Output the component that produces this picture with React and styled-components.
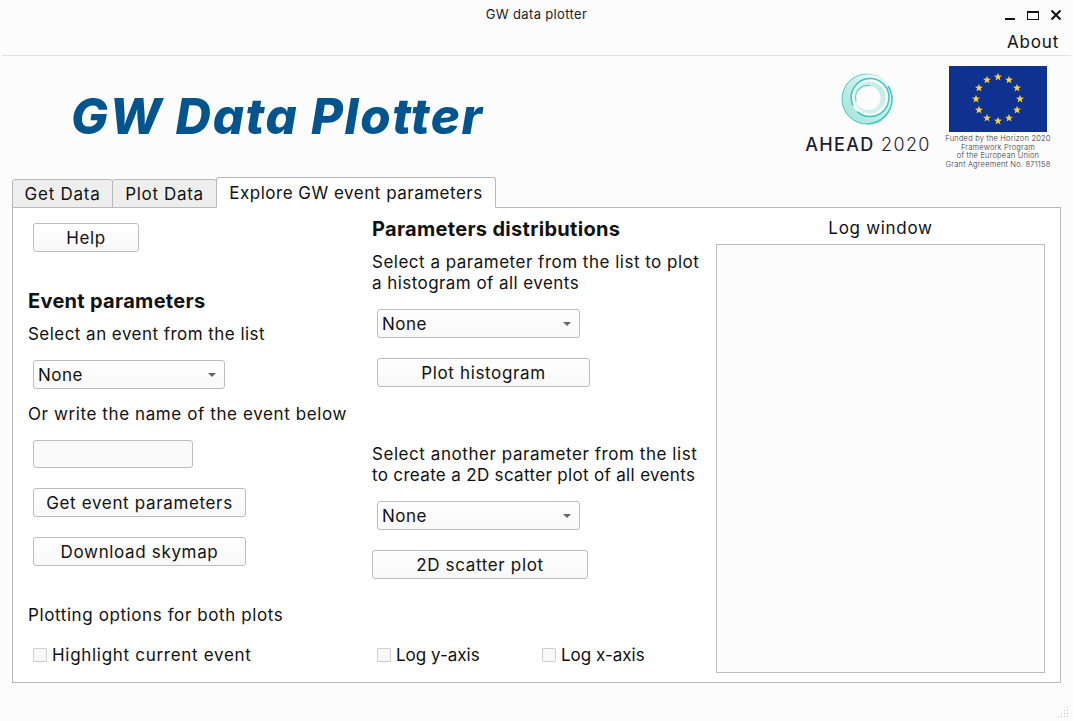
import React from "react";
import styled, { createGlobalStyle } from "styled-components";

const Global = createGlobalStyle`
  html, body { margin: 0; padding: 0; background: #fcfcfc; }
  * { box-sizing: border-box; }
  *::before, *::after { box-sizing: border-box; }
  body { font-family: "Inter", "Open Sans", sans-serif; color: #111; }
`;

const Win = styled.div`
  width: 1073px; height: 721px; display: flex; flex-direction: column; overflow: hidden; position: relative;
`;
const TitleBar = styled.div`
  height: 28px; display: flex; align-items: center; justify-content: center; font-size: 13px; letter-spacing: .35px; color: #222; position: relative;
`;
const WinControls = styled.div`
  position: absolute; right: 11px; top: 9px; display: flex; gap: 11px; align-items: center;
`;
const MenuBar = styled.div`
  height: 28px; margin: 0 2px; padding: 0 12px 0 0; display: flex; align-items: center; justify-content: flex-end;
  border-bottom: 1px solid #e2e2e2; font-size: 17px; letter-spacing: .8px;
`;
const Header = styled.div`
  height: 121px; display: flex; align-items: flex-start; position: relative;
`;
const AppTitle = styled.h1`
  margin: 32px 0 0 71px; font-size: 49px; font-weight: 800; font-style: italic; color: #01558f; line-height: 58px; letter-spacing: 1.7px;
  flex: 1;
`;
const Ahead = styled.div`
  width: 128px; margin: 18px 11px 0 0; display: flex; flex-direction: column; align-items: center;
`;
const AheadMark = styled.svg`
  margin-top: -2px; margin-left: -2px;
`;
const AheadText = styled.div`
  font-size: 18px; line-height: 20px; margin-top: 9px; white-space: nowrap; color: #1e1e32; letter-spacing: 1.35px;
  b { font-weight: 500; } span { font-weight: 300; }
`;
const Eu = styled.div`
  width: 110px; margin: 10px 20px 0 0; display: flex; flex-direction: column; align-items: center;
`;
const EuNote = styled.div`
  font-size: 7.5px; line-height: 8.7px; font-weight: 300; letter-spacing: .2px; text-align: center; white-space: nowrap; margin-top: 3px; color: #333;
`;
const Tabs = styled.div`
  height: 31px; padding-left: 12px; display: flex; align-items: flex-end; position: relative; z-index: 1; margin-bottom: -1px;
`;
const Tab = styled.div`
  height: ${p => p.$active ? 31 : 29}px; padding: 0 12px; display: flex; align-items: center; font-size: 17px; letter-spacing: ${p => p.$ls ?? .5}px;
  width: ${p => p.$w}px; justify-content: center; white-space: nowrap;
  border: 1px solid #b9b9b9; border-radius: 3px 3px 0 0; margin-left: ${p => p.$first ? 0 : -1}px;
  background: ${p => p.$active ? "#fff" : "#eeeeee"};
  border-bottom: ${p => p.$active ? "1px solid #fff" : "1px solid #b9b9b9"};
`;
const Panel = styled.div`
  margin: 0 12px; width: 1049px; height: 476px; background: #fff; border: 1px solid #b9b9b9; display: grid;
  grid-template-columns: 344px 344px 1fr; padding-left: 15px; position: relative;
`;
const Col = styled.div`display: flex; flex-direction: column; align-items: flex-start;`;
const Heading = styled.div`
  font-size: 20px; font-weight: 700; line-height: 24px; margin-top: ${p => p.$mt || 0}px; letter-spacing: .3px;
`;
const Label = styled.div`
  font-size: 17px; line-height: 22px; margin-top: ${p => p.$mt || 0}px; white-space: nowrap; letter-spacing: ${p => p.$ls ?? .6}px;
`;
const Para = styled.div`
  margin-top: ${p => p.$mt || 0}px;
`;
const ParaLine = styled.div`
  font-size: 17px; line-height: 21px; white-space: nowrap; letter-spacing: ${p => p.$ls ?? .48}px;
`;
const Button = styled.button`
  display: block; font: inherit; font-size: 17px; letter-spacing: .65px; height: 29px; width: ${p => p.$w}px; padding: 0;
  margin-top: ${p => p.$mt || 0}px; margin-left: ${p => p.$ml ?? 5}px; color: #111;
  border: 1px solid #bdbdbd; border-radius: 3px; background: linear-gradient(#fff, #f8f8f8);
`;
const Select = styled.div`
  height: 29px; width: ${p => p.$w}px; margin-top: ${p => p.$mt || 0}px; margin-left: 5px; padding: 0 8px 0 4px;
  display: flex; align-items: center; justify-content: space-between; font-size: 17px; letter-spacing: .5px;
  border: 1px solid #bdbdbd; border-radius: 3px; background: linear-gradient(#fff, #f8f8f8);
  &::after { content: ""; width: 8px; height: 4px; border: 4px solid transparent; border-top: 4px solid #666; border-bottom: 0; }
`;
const Input = styled.div`
  height: 28px; width: 160px; margin-top: ${p => p.$mt || 0}px; margin-left: 5px;
  border: 1px solid #bdbdbd; border-radius: 3px; background: #fafafa;
`;
const Check = styled.label`
  display: flex; align-items: center; gap: 5px; font-size: 17px; letter-spacing: ${p => p.$ls ?? .7}px; white-space: nowrap; color: #111;
  margin-left: ${p => p.$ml ?? 5}px; margin-top: ${p => p.$mt || 0}px; width: ${p => p.$w ? `${p.$w}px` : "auto"};
  &::before { content: ""; width: 14px; height: 14px; flex: none; border: 1px solid #cfcfcf; border-radius: 1px; background: #f8f8f8; }
`;
const CheckRow = styled.div`display: flex; margin-top: 66px; margin-left: 5px;`;
const LogCol = styled.div`display: flex; flex-direction: column; align-items: stretch; padding-top: 9px; width: 329px;`;
const LogTitle = styled.div`font-size: 17px; line-height: 22px; text-align: center; letter-spacing: .7px;`;
const LogBox = styled.div`height: 429px; margin-top: 5px; border: 1px solid #bdbdbd; background: #fcfcfc;`;
const Grip = styled.svg`position: absolute; right: 3px; bottom: 3px;`;

const star = (cx, cy, r) => {
  let pts = [];
  for (let i = 0; i < 10; i++) {
    const a = -Math.PI / 2 + (i * Math.PI) / 5;
    const rr = i % 2 ? r * 0.42 : r;
    pts.push(`${(cx + rr * Math.cos(a)).toFixed(2)},${(cy + rr * Math.sin(a)).toFixed(2)}`);
  }
  return pts.join(" ");
};

const Flag = () => (
  <svg width="98" height="66" viewBox="0 0 98 66">
    <rect width="98" height="66" fill="#0f3290" />
    {Array.from({ length: 12 }).map((_, i) => {
      const a = (i * Math.PI) / 6;
      return <polygon key={i} points={star(49 + 22 * Math.sin(a), 33 - 22 * Math.cos(a), 4.2)} fill="#f8cf3a" />;
    })}
  </svg>
);

const Swirl = () => (
  <AheadMark width="52" height="54" viewBox="0 0 52 54" fill="none">
    <defs>
      <linearGradient id="band" x1="0.1" y1="0.9" x2="0.9" y2="0.1">
        <stop offset="0" stopColor="#a8e5de" />
        <stop offset=".55" stopColor="#c6eeea" />
        <stop offset="1" stopColor="#fcfcfc" />
      </linearGradient>
      <linearGradient id="edge" x1="0.2" y1="0.9" x2="0.9" y2="0">
        <stop offset="0" stopColor="#37c8ba" />
        <stop offset=".75" stopColor="#4fcfc4" />
        <stop offset="1" stopColor="#e4f7f5" />
      </linearGradient>
      <linearGradient id="inner" x1="0" y1="1" x2="1" y2="0.2">
        <stop offset="0" stopColor="#c9f0ec" />
        <stop offset="1" stopColor="#8fe0d7" />
      </linearGradient>
    </defs>
    <circle cx="26" cy="27" r="25" fill="url(#band)" />
    <path d="M45 10.500A25 25 0 0 0 26 2 25 25 0 0 0 1 27a25 25 0 0 0 25 25" stroke="url(#edge)" strokeWidth="1" />
    <path d="M26 52A25 25 0 0 0 51 27c0-5-1.500-9-4-13" stroke="#3bcabd" strokeWidth="1.600" />
    <circle cx="29" cy="25.500" r="19" fill="#fcfcfc" />
    <path d="M12 33.500A19 19 0 0 1 29 6.500a19 19 0 0 1 19 19 19 19 0 0 1-19 19c-5 0-10-2-13-5" stroke="#36c6b9" strokeWidth="1.500" />
    <circle cx="28.500" cy="25.500" r="16" fill="url(#inner)" opacity=".55" />
    <circle cx="27" cy="26" r="12.500" fill="#fcfcfc" />
    <path d="M15 29a12.500 12.500 0 0 1 5-13.500c3-2 6-2.500 9-2" stroke="#55d0c5" strokeWidth="1.200" />
    <path d="M19 36c4 3 9 3.500 13 2" stroke="#c9f0ec" strokeWidth="1.200" />
  </AheadMark>
);

export default function App() {
  return (
    <Win>
      <Global />
      <TitleBar>
        GW data plotter
        <WinControls>
          <svg width="12" height="12" viewBox="0 0 12 12"><rect x="1" y="9" width="10" height="2" fill="#111" /></svg>
          <svg width="12" height="12" viewBox="0 0 12 12" fill="none"><rect x=".5" y="2.5" width="11" height="8" stroke="#111" /><rect x="0" y="2" width="12" height="2" fill="#111" /></svg>
          <svg width="12" height="12" viewBox="0 0 12 12" fill="none"><path d="M1.5 1.5l9 9M10.5 1.5l-9 9" stroke="#111" strokeWidth="2" /></svg>
        </WinControls>
      </TitleBar>
      <MenuBar>About</MenuBar>
      <Header>
        <AppTitle>GW Data Plotter</AppTitle>
        <Ahead>
          <Swirl />
          <AheadText><b>AHEAD</b> <span>2020</span></AheadText>
        </Ahead>
        <Eu>
          <Flag />
          <EuNote>Funded by the Horizon 2020<br />Framework Program<br />of the European Union<br />Grant Agreement No. 871158</EuNote>
        </Eu>
      </Header>
      <Tabs>
        <Tab $first $w={101} $ls={.75}>Get Data</Tab>
        <Tab $w={105} $ls={.65}>Plot Data</Tab>
        <Tab $active $w={280}>Explore GW event parameters</Tab>
      </Tabs>
      <Panel>
        <Col>
          <Button $w={106} $mt={15}>Help</Button>
          <Heading $mt={37}>Event parameters</Heading>
          <Label $mt={10} $ls={.46}>Select an event from the list</Label>
          <Select $w={192} $mt={15}>None</Select>
          <Label $mt={14}>Or write the name of the event below</Label>
          <Input $mt={15} />
          <Button $w={213} $mt={20}>Get event parameters</Button>
          <Button $w={213} $mt={20}>Download skymap</Button>
          <Label $mt={38}>Plotting options for both plots</Label>
          <Check $mt={19}>Highlight current event</Check>
        </Col>
        <Col>
          <Heading $mt={9}>Parameters distributions</Heading>
          <Para $mt={11}>
            <ParaLine $ls={.5}>Select a parameter from the list to plot</ParaLine>
            <ParaLine $ls={.44}>a histogram of all events</ParaLine>
          </Para>
          <Select $w={203} $mt={15}>None</Select>
          <Button $w={213} $mt={20}>Plot histogram</Button>
          <Para $mt={57}>
            <ParaLine $ls={.56}>Select another parameter from the list</ParaLine>
            <ParaLine $ls={.33}>to create a 2D scatter plot of all events</ParaLine>
          </Para>
          <Select $w={203} $mt={15}>None</Select>
          <Button $w={216} $ml={0} $mt={20}>2D scatter plot</Button>
          <CheckRow>
            <Check $ml={0} $ls={0} $w={165}>Log y-axis</Check>
            <Check $ml={0} $ls={0}>Log x-axis</Check>
          </CheckRow>
        </Col>
        <LogCol>
          <LogTitle>Log window</LogTitle>
          <LogBox />
        </LogCol>
      </Panel>
      <Grip width="12" height="12" viewBox="0 0 12 12" fill="#c4c4c4">
        {[[9,1],[6,4],[9,4],[3,7],[6,7],[9,7],[0,10],[3,10],[6,10],[9,10]].map(([x,y],i)=><rect key={i} x={x} y={y} width="1" height="1" />)}
      </Grip>
    </Win>
  );
}
